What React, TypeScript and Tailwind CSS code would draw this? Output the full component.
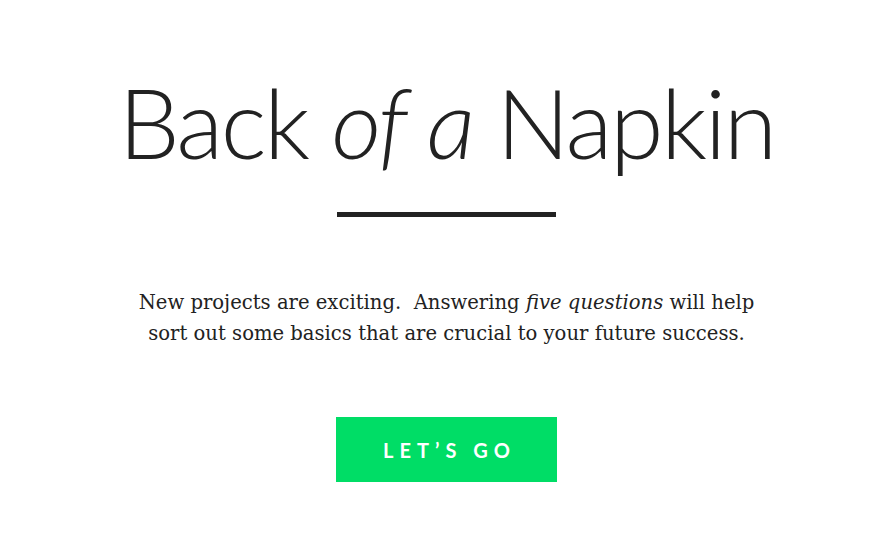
export default function App() {
  return (
    <div className="min-h-screen bg-white flex flex-col items-center pl-1 text-[#222]">
      <h1
        className="mt-[62px] text-[97px] leading-[120px] font-light tracking-[-2.5px]"
        style={{ fontFamily: "Lato, 'Open Sans', sans-serif" }}
      >
        Back <span className="italic">of a</span> Napkin
      </h1>
      <div className="mt-[30px] w-[219px] h-[5px] bg-[#222]" />
      <p
        className="mt-[70px] text-center text-[19.6px] leading-[31px] w-[660px]"
        style={{ fontFamily: "'DejaVu Serif', 'Liberation Serif', serif" }}
      >
        New projects are exciting.&nbsp; Answering <em>five questions</em> will help
        <br />
        sort out some basics that are crucial to your future success.
      </p>
      <button
        className="mt-[68px] w-[221px] h-[65px] bg-[#00dd66] text-white text-[20px] font-bold tracking-[6px] pl-[6px]"
        style={{ fontFamily: "Lato, sans-serif" }}
      >
        LET’S GO
      </button>
    </div>
  );
}
